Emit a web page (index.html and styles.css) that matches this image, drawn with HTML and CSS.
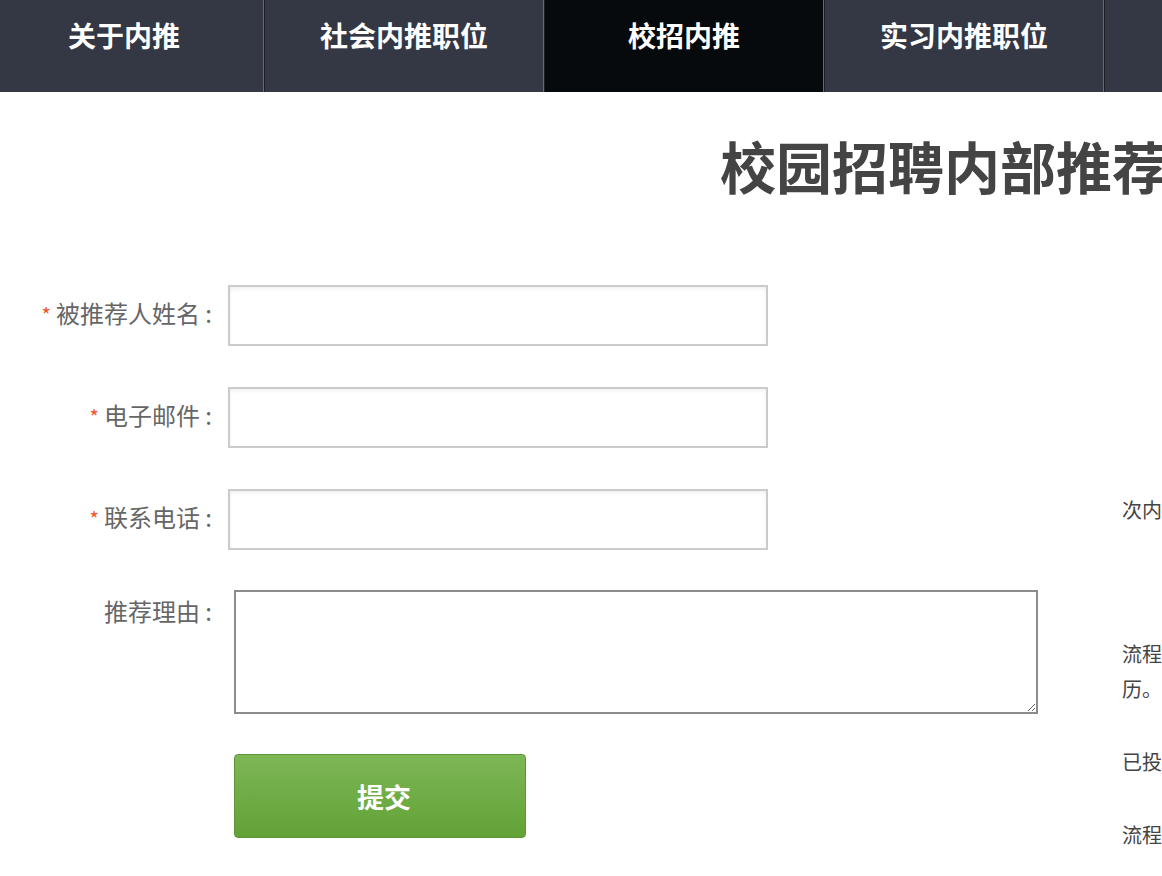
FILE: index.html
```html
<!DOCTYPE html>
<html lang="zh-CN">
<head>
<meta charset="utf-8">
<title>校园招聘内部推荐</title>
<link rel="stylesheet" href="styles.css">
</head>
<body>
<nav class="nav">
  <a class="nav-item" href="#">关于内推</a>
  <a class="nav-item" href="#">社会内推职位</a>
  <a class="nav-item active" href="#">校招内推</a>
  <a class="nav-item" href="#">实习内推职位</a>
  <a class="nav-item" href="#">我的内推</a>
</nav>
<div class="page">
  <h1 class="title">校园招聘内部推荐</h1>
  <div class="content">
    <form class="form">
      <div class="row">
        <label class="label"><span class="req">*</span>被推荐人姓名 :</label>
        <input class="input" type="text">
      </div>
      <div class="row">
        <label class="label"><span class="req">*</span>电子邮件 :</label>
        <input class="input" type="text">
      </div>
      <div class="row row-last">
        <label class="label"><span class="req">*</span>联系电话 :</label>
        <input class="input" type="text">
      </div>
      <div class="row row-top">
        <label class="label label-top">推荐理由 :</label>
        <textarea class="textarea"></textarea>
      </div>
      <div class="row">
        <button class="submit" type="button">提交</button>
      </div>
    </form>
    <aside class="notes">
      <p class="note note-first">次内推仅可推荐一名应届毕业生</p>
      <p class="note">流程说明：提交后系统将自动通知被推荐人完善简历。</p>
      <p class="note">已投递过简历的同学无需重复推荐</p>
      <p class="note">流程进度可在我的内推中查看</p>
    </aside>
  </div>
</div>
</body>
</html>
```

FILE: styles.css
```css
html, body {
  margin: 0;
  padding: 0;
  overflow: hidden;
  background: #fff;
}
body {
  font-family: "Noto Sans CJK SC", "Noto Sans", sans-serif;
  color: #444;
}
.nav {
  display: flex;
  height: 92px;
  background: #343744;
  margin-left: -16px;
  width: 1600px;
}
.nav-item {
  flex: 0 0 auto;
  box-sizing: border-box;
  width: 280px;
  height: 92px;
  line-height: 70px;
  text-align: center;
  color: #fff;
  font-size: 28px;
  font-weight: bold;
  text-decoration: none;
  border-left: 1px solid #1d1f25;
  border-right: 1px solid #676973;
}
.nav-item.active {
  background: #070a0d;
}
.page {
  width: 1888px;
}
.title {
  margin: 45px 0 0;
  text-align: center;
  font-size: 56px;
  line-height: 56px;
  font-weight: bold;
  color: #444;
  letter-spacing: 0;
}
.content {
  display: flex;
  margin-top: 92px;
}
.form {
  width: 1122px;
  flex: 0 0 auto;
}
.row {
  display: flex;
  align-items: center;
  margin-bottom: 41px;
}
.row-last {
  margin-bottom: 40px;
}
.row-top {
  align-items: flex-start;
  margin-bottom: 40px;
}
.label {
  width: 212px;
  flex: 0 0 auto;
  text-align: right;
  font-size: 24px;
  color: #666;
  line-height: 30px;
  padding-bottom: 4px;
  margin-right: 16px;
  white-space: nowrap;
}
.label-top {
  padding-top: 6px;
  padding-bottom: 0;
  margin-right: 22px;
}
.req {
  color: #f2512b;
  font-size: 20px;
  margin-right: 5px;
}
.input {
  box-sizing: border-box;
  width: 540px;
  height: 61px;
  border: 2px solid #cbcbcb;
  box-shadow: inset 0 2px 4px rgba(0, 0, 0, 0.06);
  padding: 0 12px;
  font-size: 18px;
  outline: none;
  margin: 0;
}
.textarea {
  box-sizing: border-box;
  width: 804px;
  height: 124px;
  border: 2px solid #8c8c8c;
  margin: 0;
  padding: 8px;
  font-size: 18px;
  outline: none;
}
.submit {
  margin-left: 234px;
  box-sizing: border-box;
  width: 292px;
  height: 84px;
  padding: 0 0 0 8px;
  border: 1px solid #5c9636;
  border-radius: 4px;
  background: linear-gradient(#7cb755, #62a237);
  color: #fff;
  font-family: inherit;
  font-size: 27px;
  font-weight: bold;
  cursor: pointer;
}
.notes {
  width: 500px;
  flex: 0 0 auto;
  padding-top: 207px;
}
.note {
  margin: 0 0 38px;
  font-size: 20px;
  line-height: 35px;
  color: #444;
  width: 460px;
}
.note-first {
  margin-bottom: 109px;
}
```
